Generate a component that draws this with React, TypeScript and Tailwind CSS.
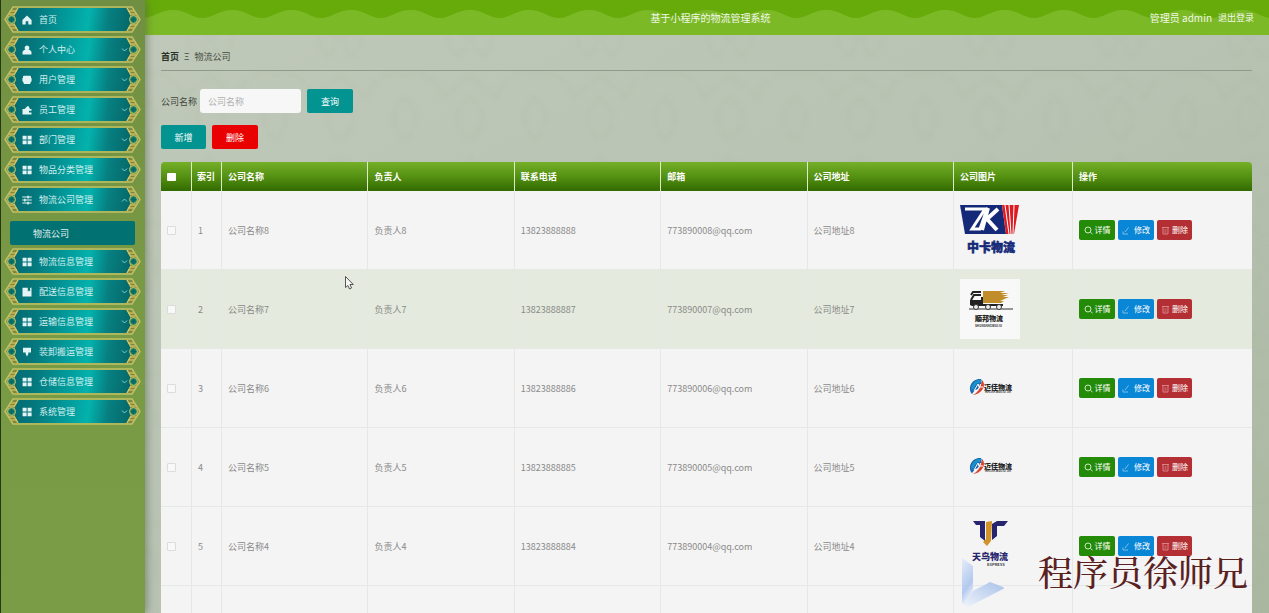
import React from 'react';

type IconName = 'home' | 'user' | 'service' | 'wallet' | 'grid' | 'sliders' | 'map' | 'brush';

interface MenuEntry {
  label: string;
  icon: IconName;
  arrow?: 'up' | 'down';
  children?: string[];
}

const menu: MenuEntry[] = [
  { label: '首页', icon: 'home' },
  { label: '个人中心', icon: 'user', arrow: 'down' },
  { label: '用户管理', icon: 'service', arrow: 'down' },
  { label: '员工管理', icon: 'wallet', arrow: 'down' },
  { label: '部门管理', icon: 'grid', arrow: 'down' },
  { label: '物品分类管理', icon: 'grid', arrow: 'down' },
  { label: '物流公司管理', icon: 'sliders', arrow: 'up', children: ['物流公司'] },
  { label: '物流信息管理', icon: 'grid', arrow: 'down' },
  { label: '配送信息管理', icon: 'map', arrow: 'down' },
  { label: '运输信息管理', icon: 'grid', arrow: 'down' },
  { label: '装卸搬运管理', icon: 'brush', arrow: 'down' },
  { label: '仓储信息管理', icon: 'grid', arrow: 'down' },
  { label: '系统管理', icon: 'grid', arrow: 'down' },
];

const iconPaths: Record<IconName, string> = {
  home: 'M5 .6 9.6 5v4.4H6.3V6.2H3.7v3.2H.4V5z',
  user: 'M5 .5a2.3 2.3 0 0 1 1.5 4.1C8.4 5 9.5 6.2 9.5 7.6v1.9H.5V7.6C.5 6.2 1.6 5 3.5 4.6A2.3 2.3 0 0 1 5 .5z',
  service: 'M2 .8h6a1 1 0 0 1 1 1V3h.6v3.500H9L8 9H2L1 6.500H.4V3H1V1.800a1 1 0 0 1 1-1z',
  wallet: 'M.5 4h2L6 .8l1.7 2.2V4h1.8v1.8H7v1.600h2.500v2H.5z',
  grid: 'M.6.8h4v3.700h-4zM5.600.8h4v3.700h-4zM.6 5.500h4v3.700h-4zM5.600 5.500h4v3.700h-4z',
  sliders: 'M.3 1.600h5V.7h1.500v.9h2.900v.9H6.800v.9H5.300v-.9h-5zM.3 4.600h1.800v-.9h1.500v.9h6.100v.9H3.600v.9H2.100v-.9H.3zM.3 7.600h5v-.9h1.500v.9h2.900v.9H6.800v.9H5.300v-.9h-5z',
  map: 'M.5.8h5.300v3.700L7 3.500l1.100 1V.8h1.400v8.600h-9z',
  brush: 'M1 .8h8v4.700H6.300v1.400L5 9.600 3.700 6.900V5.500H1z',
};

const companies = [
  { id: 1, no: 8, logo: 'zhongka' },
  { id: 2, no: 7, logo: 'shunbang' },
  { id: 3, no: 6, logo: 'maijia' },
  { id: 4, no: 5, logo: 'maijia' },
  { id: 5, no: 4, logo: 'tianniao' },
];

const columns = ['公司名称', '负责人', '联系电话', '邮箱', '公司地址', '公司图片', '操作'];

const FrameCap = () => (
  <g>
    <path d="M15 1H9L1 13.500 9 26h6l-4-7V8z" fill="#7d8740" />
    <path d="M7 5h6M5 8h5M5 19h5M7 22h6" stroke="#c9b857" strokeWidth="1.500" fill="none" />
    <path d="M14 2 10 9M14 25l-4-7" fill="none" stroke="#cdc566" strokeWidth="1.500" />
    <circle cx="7.500" cy="13.500" r="4" fill="#2f8a63" stroke="#c9c468" />
    <path d="M7.500 11v5M5 13.500h5" stroke="#04696a" strokeWidth="2" />
  </g>
);

const MenuFrame = () => (
  <svg className="absolute inset-0 h-full w-full" viewBox="0 0 137 27" preserveAspectRatio="none" aria-hidden="true">
    <path d="M14 2h109l4 7v9l-4 7H14l-4-7V9z" fill="url(#plate)" />
    <FrameCap />
    <g transform="translate(137 0) scale(-1 1)">
      <FrameCap />
    </g>
    <path d="M9 1h119l8 12.500L128 26H9L1 13.500z" fill="none" stroke="#bfc164" strokeWidth="1.500" />
  </svg>
);

const MenuItem = ({ entry }: { entry: MenuEntry }) => (
  <a href="#" className="relative flex h-[27px] items-center pr-[13px] pl-[18px] text-[9px] text-[#d2efed]">
    <MenuFrame />
    <svg className="relative mr-[7px] h-[10px] w-[10px]" viewBox="0 0 10 10" aria-hidden="true">
      <path d={iconPaths[entry.icon]} fill="#e4f3f3" />
    </svg>
    <span className="relative flex-1">{entry.label}</span>
    {entry.arrow && (
      <svg className="relative h-[6px] w-[7px]" viewBox="0 0 7 6" fill="none" stroke="#7fd0cc" aria-hidden="true">
        <path d={entry.arrow === 'up' ? 'M1 4.500 3.500 2 6 4.500' : 'M1 1.500 3.500 4 6 1.500'} />
      </svg>
    )}
  </a>
);

const Sidebar = () => (
  <aside className="relative z-10 w-[145px] shrink-0 border-l border-[#24390f] bg-linear-to-b from-[#718f42] via-[#799a45] to-[#7a9c46] pt-[6px] pr-[4px] pl-[3px] shadow-[2px_0_8px_rgba(80,95,70,0.55)]">
    <svg className="absolute h-0 w-0" aria-hidden="true">
      <defs>
        <linearGradient id="plate" x1="0" y1="0" x2="1" y2="0.03">
          <stop offset="0" stopColor="#036c72" />
          <stop offset="0.2" stopColor="#04797e" />
          <stop offset="0.45" stopColor="#02999a" />
          <stop offset="0.65" stopColor="#03b2ad" />
          <stop offset="0.82" stopColor="#077f81" />
          <stop offset="1" stopColor="#066a6b" />
        </linearGradient>
      </defs>
    </svg>
    <nav className="flex flex-col gap-[3px]">
      {menu.map((entry) => (
        <React.Fragment key={entry.label}>
          <MenuItem entry={entry} />
          {entry.children?.map((child) => (
            <a
              key={child}
              href="#"
              className="mx-[6px] mt-[5px] flex h-[24px] items-center rounded-[2px] bg-[#017172] pl-[23px] text-[9px] text-[#e3f1f0]"
            >
              {child}
            </a>
          ))}
        </React.Fragment>
      ))}
    </nav>
  </aside>
);

const Header = () => (
  <header className="relative flex h-[35px] items-center justify-end bg-[#7cb927] pr-[15px] text-white">
    <svg className="absolute inset-0 h-full w-full" aria-hidden="true">
      <defs>
        <pattern id="wave" x="-2" width="59.400" height="35" patternUnits="userSpaceOnUse">
          <path d="M0 0h59.400v18C49 18 43 10 30 10S10 18 0 18z" fill="#66ab09" />
        </pattern>
      </defs>
      <rect width="100%" height="35" fill="url(#wave)" />
    </svg>
    <h1 className="absolute inset-x-0 pl-[7px] text-center text-[10px] text-[#f1f8e6]">基于小程序的物流管理系统</h1>
    <div className="relative flex items-center gap-[6px] text-[9px] text-[#f1f8e6]">
      <span className="text-[10px]">管理员 admin</span>
      <a href="#">退出登录</a>
    </div>
  </header>
);

const Backdrop = () => (
  <svg className="absolute inset-0 h-full w-full" aria-hidden="true">
    <defs>
      <pattern id="damask" width="130" height="150" patternUnits="userSpaceOnUse">
        <g fill="none" stroke="#93a08d" strokeWidth="5" strokeLinecap="round" strokeDasharray="9 6 16 8" opacity="0.09">
          <path d="M65 8c-22 18-30 32-12 48 12-10 12-24 0-26M65 8c22 18 30 32 12 48-12-10-12-24 0-26" />
          <path d="M0 75c20-6 34 6 38 24 12-14 20-14 27-26 7 12 15 12 27 26 4-18 18-30 38-24" />
          <path d="M65 98c-14 10-20 26 0 42 20-16 14-32 0-42M0 98c12 10 16 26 0 42M130 98c-12 10-16 26 0 42" />
        </g>
      </pattern>
      <filter id="soft">
        <feGaussianBlur stdDeviation="2" />
      </filter>
    </defs>
    <rect width="100%" height="100%" fill="url(#damask)" filter="url(#soft)" />
  </svg>
);

const CompanyLogo = ({ name }: { name: string }) => {
  if (name === 'zhongka') {
    return (
      <svg className="h-[60px] w-[60px]" viewBox="0 0 60 60" role="img" aria-label="中卡物流">
        <path d="M0 5h42l4 29H5z" fill="#142a78" />
        <path d="M42 5h17l-5 29h-8z" fill="#dc1c22" />
        <path d="m45 5 4 29M49 5l2 29M54 5l-1 29" stroke="#fff" strokeWidth="1" />
        <path d="M5 9h20L12 29h8L27 9" fill="none" stroke="#fff" strokeWidth="3" />
        <path d="m28 8-6 22M38 9 27 19l10 11" fill="none" stroke="#fff" strokeWidth="4" />
        <text x="7" y="52" fontSize="12" fontWeight="900" fill="#142a78" stroke="#142a78" strokeWidth="0.500">中卡物流</text>
      </svg>
    );
  }
  if (name === 'shunbang') {
    return (
      <svg className="h-[60px] w-[60px] bg-[#f7f8f7]" viewBox="0 0 60 60" role="img" aria-label="顺邦物流">
        <path d="M23 12h22l-5 2h9l-8 2h7l-5 2h6l-9 4h4l-3 2H23z" fill="#c18d2a" />
        <path d="M21 13h-8l-2 3M21 16h-7l-3 5" fill="none" stroke="#222" strokeWidth="2" />
        <path d="M10 21h11v-3h2v7h20v2h-31l-2-1z" fill="#222" />
        <path d="M9 30h44" stroke="#333" />
        <circle cx="16" cy="28" r="2.500" fill="#eee" stroke="#333" />
        <circle cx="28" cy="28" r="2.500" fill="#eee" stroke="#333" />
        <circle cx="39" cy="28" r="2.500" fill="#eee" stroke="#333" />
        <text x="15" y="42" fontSize="7" fontWeight="900" fill="#222">顺邦物流</text>
        <text x="15" y="48" fontSize="3" fontWeight="700" fill="#333">SHUNBANGWULIU</text>
      </svg>
    );
  }
  if (name === 'maijia') {
    return (
      <svg className="h-[60px] w-[60px]" viewBox="0 0 60 60" role="img" aria-label="迈佳物流">
        <path d="M21 21c-9-1-14 9-9 15l3-4c3 0 4-3 5-6h3l-1 3z" fill="#1a67ad" />
        <path d="M11 32c0-6 5-11 11-10l-2 3c-4 0-5 3-6 6z" fill="#1b91cb" />
        <path d="M22 22c5 5 0 14-9 15 4-2 7-6 8-10z" fill="#d9432f" />
        <path d="m14 33 4-7 1 3h4" fill="none" stroke="#fff" />
        <text x="24" y="32" fontSize="7" fontWeight="900" fill="#222">迈佳物流</text>
        <text x="25" y="35" fontSize="3" fontWeight="700" fill="#333">MAIJIA WULIU JIA</text>
      </svg>
    );
  }
  return (
    <svg className="h-[60px] w-[60px]" viewBox="0 0 60 60" role="img" aria-label="天鸟物流">
      <path d="M13 5h12v20l-5-4V9h-4zM48 5H37l-5 3v16l5-4V10h7z" fill="#28256f" />
      <path d="m26 6 6-1-1 20-4 5-4-4 3-3z" fill="#d0942b" />
      <text x="12" y="44" fontSize="9" fontWeight="900" fill="#28256f">天鸟物流</text>
      <text x="27" y="50" fontSize="4" fontWeight="700" fill="#444">EXPRESS</text>
    </svg>
  );
};

const RowActions = () => (
  <div className="flex gap-[3px] text-[8px] text-white">
    <button type="button" className="flex h-[20px] w-[36px] items-center justify-center gap-[2px] rounded-[2px] bg-[#238b08]">
      <svg className="h-[9px] w-[9px]" viewBox="0 0 9 9" fill="none" stroke="#cde6c6" aria-hidden="true">
        <circle cx="4" cy="4" r="3" />
        <path d="m6.500 6.500 2 1.500" />
      </svg>
      详情
    </button>
    <button type="button" className="flex h-[20px] w-[36px] items-center justify-center gap-[3px] rounded-[2px] bg-[#0a86d6]">
      <svg className="h-[9px] w-[9px]" viewBox="0 0 9 9" fill="none" stroke="#79bfea" aria-hidden="true">
        <path d="M3 6 6.500 1.500M1 5.500v2.500h5" />
      </svg>
      修改
    </button>
    <button type="button" className="flex h-[20px] w-[35px] items-center justify-center gap-[2px] rounded-[2px] bg-[#b32f33]">
      <svg className="h-[9px] w-[9px]" viewBox="0 0 9 9" fill="none" stroke="#d88487" aria-hidden="true">
        <path d="M1 1.500h7M2 2v6h5V2M3.500 4h2M3.500 6h2" />
      </svg>
      删除
    </button>
  </div>
);

const cellStyles =
  '[&>td]:h-[79px] [&>td]:border-r [&>td]:border-b [&>td]:border-[#e5e8e5] [&>td]:px-[6px] [&>td]:py-0 [&>td:last-child]:border-r-0';

const CompanyTable = () => (
  <table className="mt-[13px] w-full table-fixed border-separate border-spacing-0 text-left text-[9px]">
    <colgroup>
      <col className="w-[31px]" />
      <col className="w-[30px]" />
      <col />
      <col />
      <col />
      <col />
      <col />
      <col className="w-[119px]" />
      <col className="w-[179px]" />
    </colgroup>
    <thead>
      <tr className="bg-linear-to-b from-[#74b027] via-[#559112] to-[#316b02] text-white">
        <th className="h-[29px] rounded-tl-[4px] border-r border-[#dcebc8] px-[6px]">
          <input type="checkbox" aria-label="全选" className="block h-[8px] w-[9px] appearance-none rounded-[1px] bg-white" />
        </th>
        <th className="border-r border-[#dcebc8] pl-[5px] font-bold">索引</th>
        {columns.map((col) => (
          <th key={col} className="border-r border-[#dcebc8] px-[6px] font-bold last:rounded-tr-[4px] last:border-r-0">
            {col}
          </th>
        ))}
      </tr>
    </thead>
    <tbody className="text-[#8a8a8a]">
      {companies.map(({ id, no, logo }) => (
        <tr key={id} className={`${id === 2 ? 'bg-[#e4eadd]' : 'bg-[#f4f4f4]'} ${cellStyles}`}>
          <td>
            <input
              type="checkbox"
              aria-label={`选择公司名称${no}`}
              className="block h-[9px] w-[9px] appearance-none rounded-[1px] border border-[#dcdcdc] bg-[#f8f8f8]"
            />
          </td>
          <td>{id}</td>
          <td>公司名称{no}</td>
          <td>负责人{no}</td>
          <td>1382388888{no}</td>
          <td>77389000{no}@qq.com</td>
          <td>公司地址{no}</td>
          <td>
            <CompanyLogo name={logo} />
          </td>
          <td>
            <RowActions />
          </td>
        </tr>
      ))}
      <tr className={`bg-[#f4f4f4] ${cellStyles}`}>
        <td />
        <td />
        {columns.map((col) => (
          <td key={col} />
        ))}
      </tr>
    </tbody>
  </table>
);

const App = () => (
  <div className="relative flex h-screen overflow-hidden bg-[#bbc5b5] font-['Noto_Sans_CJK_SC',sans-serif] leading-none">
    <Sidebar />
    <div className="relative min-w-0 flex-1 bg-linear-to-br from-[#c0c9b9] via-[#b8c3b3] to-[#aab7a0]">
      <Backdrop />
      <Header />
      <main className="relative pr-[17px] pl-[16px] text-[9px]">
        <nav className="flex h-[36px] items-center gap-[5px] border-b border-[#8f9a8a] pt-[8px] text-[#444c42]">
          <a href="#" className="font-bold text-[#2c332a]">首页</a>
          <span>Ξ</span>
          <span>物流公司</span>
        </nav>
        <form className="mt-[18px] flex items-center text-[#3f463d]" onSubmit={(e) => e.preventDefault()}>
          <label htmlFor="company">公司名称</label>
          <input
            id="company"
            placeholder="公司名称"
            className="ml-[3px] h-[24px] w-[101px] rounded-[3px] bg-[#f7f7f7] px-[8px] outline-none placeholder:text-[#b0b0b0]"
          />
          <button type="submit" className="ml-[6px] h-[24px] w-[46px] rounded-[2px] bg-[#039492] text-white">
            查询
          </button>
        </form>
        <div className="mt-[12px] flex gap-[6px] text-white">
          <button type="button" className="h-[24px] w-[45px] rounded-[2px] bg-[#039492]">新增</button>
          <button type="button" className="h-[24px] w-[46px] rounded-[2px] bg-[#e90000]">删除</button>
        </div>
        <CompanyTable />
      </main>
    </div>

    {/* video overlay: player mark, author name and mouse pointer */}
    <svg className="absolute bottom-[6px] left-[961px] z-20 h-[50px] w-[46px]" viewBox="0 0 46 50" aria-hidden="true">
      <defs>
        <linearGradient id="markA" x1="0" y1="0" x2="0.300" y2="1">
          <stop offset="0" stopColor="#e6edf8" />
          <stop offset="0.700" stopColor="#b3c9ee" />
          <stop offset="1" stopColor="#eef2f8" />
        </linearGradient>
        <linearGradient id="markB" x1="1" y1="0" x2="0" y2="1">
          <stop offset="0" stopColor="#a9c2ea" />
          <stop offset="1" stopColor="#edf2f9" />
        </linearGradient>
      </defs>
      <path d="m1 1 11 8v23L5 48q-4 0-4-5z" fill="url(#markA)" />
      <path d="m12 34 17-9 13 5q2 1 0 2L9 49q-5 1-6-3z" fill="url(#markB)" />
    </svg>
    <div className="absolute right-[21px] bottom-[24px] z-20 font-['Noto_Serif_CJK_SC','Noto_Sans_CJK_SC',serif] text-[35px] leading-none font-medium text-[#5a211f]">
      程序员徐师兄
    </div>
    <svg className="absolute top-[276px] left-[345px] z-20 h-[14px] w-[9px]" viewBox="0 0 9 14" aria-hidden="true">
      <path d="M.5.5v11l2.400-2 1.600 3.500 2-1L5 8.500h3.300z" fill="#f6f6f6" stroke="#444" strokeWidth="0.900" />
    </svg>
  </div>
);

export default App;
